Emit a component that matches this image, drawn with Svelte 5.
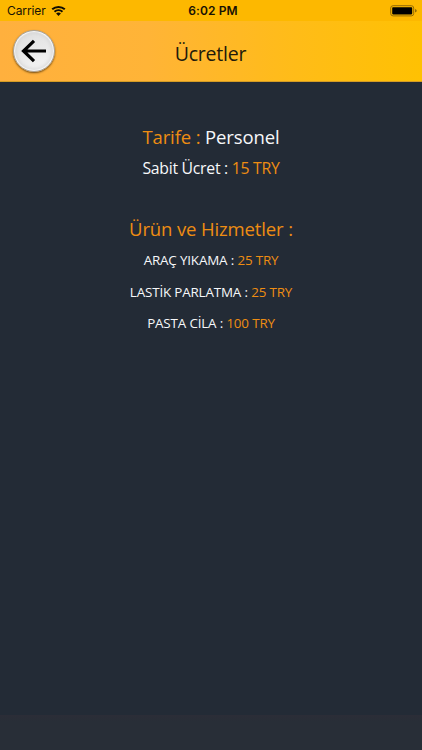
<script lang="ts">
    const tariff = { name: 'Personel', fee: '15 TRY' };

    const services = [
        { name: 'ARAÇ YIKAMA', price: '25 TRY' },
        { name: 'LASTİK PARLATMA', price: '25 TRY' },
        { name: 'PASTA CİLA', price: '100 TRY' }
    ];
</script>

<div class="screen">
    <div class="status-bar">
        <div class="carrier">
            <span>Carrier</span>
            <svg class="wifi" viewBox="0 0 15 11" width="15" height="11">
                <path d="M1.2 4.3C4.7 1.1 10.3 1.1 13.8 4.3M3.5 6.7C5.8 4.7 9.2 4.7 11.5 6.7" />
                <path class="dot" d="M5.1 8.4C6.5 7.2 8.5 7.2 9.9 8.4L7.5 10.9Z" />
            </svg>
        </div>
        <div class="clock">6:02 PM</div>
        <div class="battery">
            <svg viewBox="0 0 27 12" width="27" height="12">
                <rect class="shell" x="0.7" y="0.7" width="23" height="10.2" rx="2.4" />
                <rect x="2.2" y="2.2" width="20" height="7.2" rx="0.8" />
                <path class="cap" d="M25 4Q26.8 4.5 26.8 5.8T25 7.6Z" />
            </svg>
        </div>
    </div>

    <header class="nav-bar">
        <button class="back" aria-label="Geri">
            <svg viewBox="0 0 26 24" width="26" height="24">
                <path d="M25 12H2.5M13 1.8L2.5 12L13 22.2" />
            </svg>
        </button>
        <h1>Ücretler</h1>
    </header>

    <main>
        <section class="tariff">
            <h2>Tarife : <span class="light">{tariff.name}</span></h2>
            <p>Sabit Ücret : <span class="price">{tariff.fee}</span></p>
        </section>

        <section class="services">
            <h2>Ürün ve Hizmetler :</h2>
            {#each services as service (service.name)}
                <p>{service.name} : <span class="price">{service.price}</span></p>
            {/each}
        </section>
    </main>

    <footer></footer>
</div>

<style>
    :global(body) {
        margin: 0;
    }

    .screen {
        display: flex;
        flex-direction: column;
        height: 750px;
        overflow: hidden;
        background-color: #232b36;
        color: #f7f8fa;
        font-family: 'Open Sans', 'Noto Sans', sans-serif;
    }

    .status-bar {
        display: grid;
        grid-template-columns: 1fr auto 1fr;
        align-items: center;
        box-sizing: border-box;
        height: 21px;
        padding: 0 5px 0 7px;
        background-color: #fdb800;
        color: #171204;
        font-family: Inter, sans-serif;
        font-size: 12px;
    }

    .carrier {
        display: flex;
        align-items: center;
        gap: 5px;
        letter-spacing: -0.1px;
    }

    .wifi {
        fill: none;
        stroke: #100d02;
        stroke-width: 2;
    }

    .wifi .dot {
        fill: #100d02;
        stroke: none;
    }

    .clock {
        font-weight: 600;
        letter-spacing: 0.1px;
        padding-left: 2px;
    }

    .battery {
        display: flex;
        justify-content: flex-end;
    }

    .battery .shell {
        fill: none;
        stroke: #946b05;
        stroke-width: 1;
    }

    .battery .cap {
        fill: #946b05;
    }

    .nav-bar {
        display: grid;
        grid-template-columns: 42px 1fr 42px;
        align-items: start;
        box-sizing: border-box;
        height: 61px;
        padding: 9px 14px 0 13px;
        background: linear-gradient(90deg, #ffb03e 0%, #ffb437 35%, #ffbc18 70%, #ffc102 100%);
        border-bottom: 1px solid #d49c25;
    }

    .back {
        display: flex;
        align-items: center;
        justify-content: center;
        box-sizing: border-box;
        width: 42px;
        height: 42px;
        padding: 0 1px 1px 0;
        border: 1px solid #a9a39a;
        border-radius: 50%;
        background: linear-gradient(160deg, #dedede, #e9e9e9 50%, #f8f8f8);
        box-shadow: inset 0 0 1px 1px #fafafa, inset 0 0 4px 2px #d4d4d4, 0 1px 2px rgba(70, 45, 10, 0.75);
    }

    .back svg {
        fill: none;
        stroke: #000;
        stroke-width: 3.2;
    }

    h1,
    h2,
    p {
        margin: 0;
        font-weight: 400;
        text-align: center;
    }

    h1 {
        padding-top: 11px;
        color: #211a0b;
        font-size: 19.5px;
        letter-spacing: -0.2px;
        line-height: 26px;
    }

    main {
        flex: 1;
        padding-top: 41px;
    }

    h2 {
        color: #ee8d12;
        font-size: 18.5px;
        letter-spacing: -0.13px;
        line-height: 28px;
    }

    .light {
        color: #f7f8fa;
    }

    .price {
        color: #ee8d12;
    }

    .tariff p {
        padding-top: 5px;
        font-size: 15.8px;
        letter-spacing: -0.28px;
        line-height: 24px;
    }

    .services {
        padding-top: 35px;
    }

    .services p {
        padding-top: 11.5px;
        font-size: 13.4px;
        letter-spacing: -0.16px;
        line-height: 20px;
    }

    .services h2 + p {
        padding-top: 7px;
    }

    footer {
        height: 35px;
        background: linear-gradient(#2b2d37, #282e37 7px);
    }
</style>
